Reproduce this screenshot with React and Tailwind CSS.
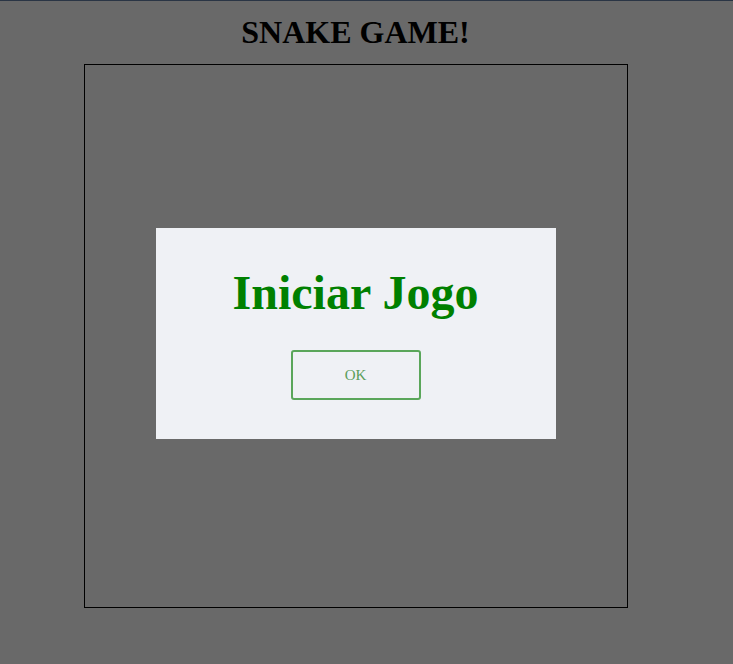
export default function App() {
  return (
    <div className="min-h-[664px] w-full bg-[#696969] border-t border-[#2a3545]" style={{ fontFamily: '"Liberation Serif", "Times New Roman", serif' }}>
      <div className="w-[711px] flex flex-col items-center">
        <h1 className="mt-[13px] text-[32px] font-bold leading-[37px] text-black">SNAKE GAME!</h1>
        <div className="mt-[13px] w-[544px] h-[544px] border border-black flex items-start justify-center">
          <div className="mt-[163px] w-[400px] h-[211px] bg-[#eff1f5] flex flex-col items-center">
            <div className="mt-[37px] text-[48px] font-bold leading-[55px] text-[#008000]">Iniciar Jogo</div>
            <button className="mt-[30px] w-[130px] h-[50px] border-2 border-[#5aa65a] rounded-[3px] text-[15px] text-[#5a9e5a] bg-transparent">OK</button>
          </div>
        </div>
      </div>
    </div>
  );
}
